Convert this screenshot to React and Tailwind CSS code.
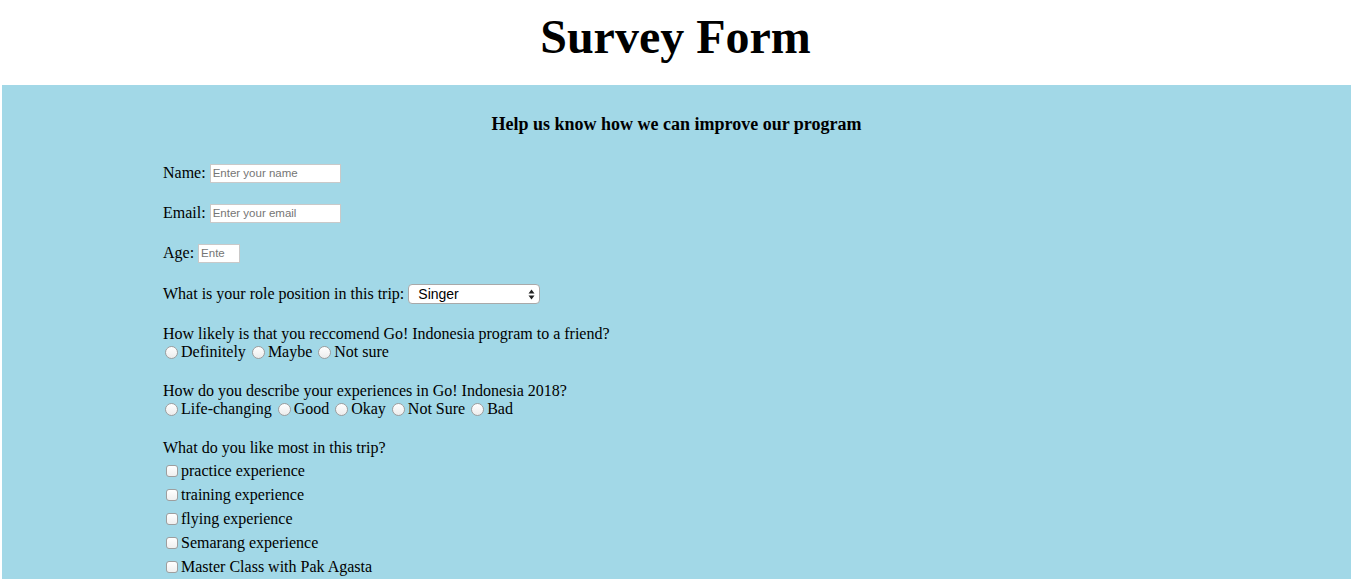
import React from "react";

const serif = { fontFamily: '"Liberation Serif", "Times New Roman", serif' };

function Radio() {
  return (
    <span className="inline-block w-[13px] h-[13px] rounded-full border border-[#9e9e9e] bg-gradient-to-b from-white to-[#ececec] mr-[3px] ml-[2px] shrink-0" />
  );
}

function Check() {
  return (
    <span className="inline-block w-[12px] h-[12px] rounded-[3px] border border-[#9e9e9e] bg-gradient-to-b from-white to-[#efefef] mr-[3px] ml-[3px] shrink-0" />
  );
}

function RadioItem({ label }) {
  return (
    <span className="inline-flex items-center mr-[4px]">
      <Radio />
      <span>{label}</span>
    </span>
  );
}

function CheckRow({ label }) {
  return (
    <div className="flex items-center h-[18px] mt-[6px]">
      <Check />
      <span>{label}</span>
    </div>
  );
}

function TextInput({ ph, w }) {
  return (
    <input
      placeholder={ph}
      className={`${w} h-[19px] bg-white border border-[#c9c9c9] px-[2px] text-[11.5px] placeholder:text-[#757575] outline-none`}
      style={{ fontFamily: '"Liberation Sans", Arial, sans-serif' }}
    />
  );
}

export default function App() {
  return (
    <div className="w-[1351px] h-[579px] overflow-hidden bg-white text-black text-[16px]" style={serif}>
      <header className="h-[85px] flex items-center justify-center">
        <h1 className="text-[48px] font-bold leading-none mt-[-12px]">Survey Form</h1>
      </header>
      <section className="ml-[2px] bg-[#a2d8e7] h-[494px] pt-[28px]">
        <h3 className="text-center text-[18px] font-bold leading-[22px]">
          Help us know how we can improve our program
        </h3>
        <div className="pl-[161px] leading-[18px]">
          <div className="flex items-center h-[20px] mt-[28px]">
            <span className="mr-[4px]">Name:</span>
            <TextInput ph="Enter your name" w="w-[131px]" />
          </div>
          <div className="flex items-center h-[20px] mt-[20px]">
            <span className="mr-[4px]">Email:</span>
            <TextInput ph="Enter your email" w="w-[131px]" />
          </div>
          <div className="flex items-center h-[20px] mt-[20px]">
            <span className="mr-[4px]">Age:</span>
            <TextInput ph="Ente" w="w-[42px]" />
          </div>
          <div className="flex items-center h-[20px] mt-[21px]">
            <span className="mr-[4px]">What is your role position in this trip:</span>
            <div
              className="relative w-[132px] h-[20px] bg-white border border-[#a9a9a9] rounded-[4px] flex items-center pl-[9px] text-[14px]"
              style={{ fontFamily: '"Liberation Sans", Arial, sans-serif' }}
            >
              Singer
              <svg className="absolute right-[4px] top-[4px]" width="7" height="11" viewBox="0 0 7 11">
                <path d="M3.5 0.5 L6.5 4.5 L0.5 4.5 Z" fill="#222" />
                <path d="M3.5 10.5 L6.5 6.5 L0.5 6.5 Z" fill="#222" />
              </svg>
            </div>
          </div>
          <div className="mt-[21px] h-[18px] flex items-center">
            How likely is that you reccomend Go! Indonesia program to a friend?
          </div>
          <div className="h-[18px] flex items-center">
            <RadioItem label="Definitely" />
            <RadioItem label="Maybe" />
            <RadioItem label="Not sure" />
          </div>
          <div className="mt-[21px] h-[18px] flex items-center">
            How do you describe your experiences in Go! Indonesia 2018?
          </div>
          <div className="h-[18px] flex items-center">
            <RadioItem label="Life-changing" />
            <RadioItem label="Good" />
            <RadioItem label="Okay" />
            <RadioItem label="Not Sure" />
            <RadioItem label="Bad" />
          </div>
          <div className="mt-[21px] h-[18px] flex items-center">What do you like most in this trip?</div>
          <div className="mt-[-1px]">
            <CheckRow label="practice experience" />
            <CheckRow label="training experience" />
            <CheckRow label="flying experience" />
            <CheckRow label="Semarang experience" />
            <CheckRow label="Master Class with Pak Agasta" />
          </div>
        </div>
      </section>
    </div>
  );
}
